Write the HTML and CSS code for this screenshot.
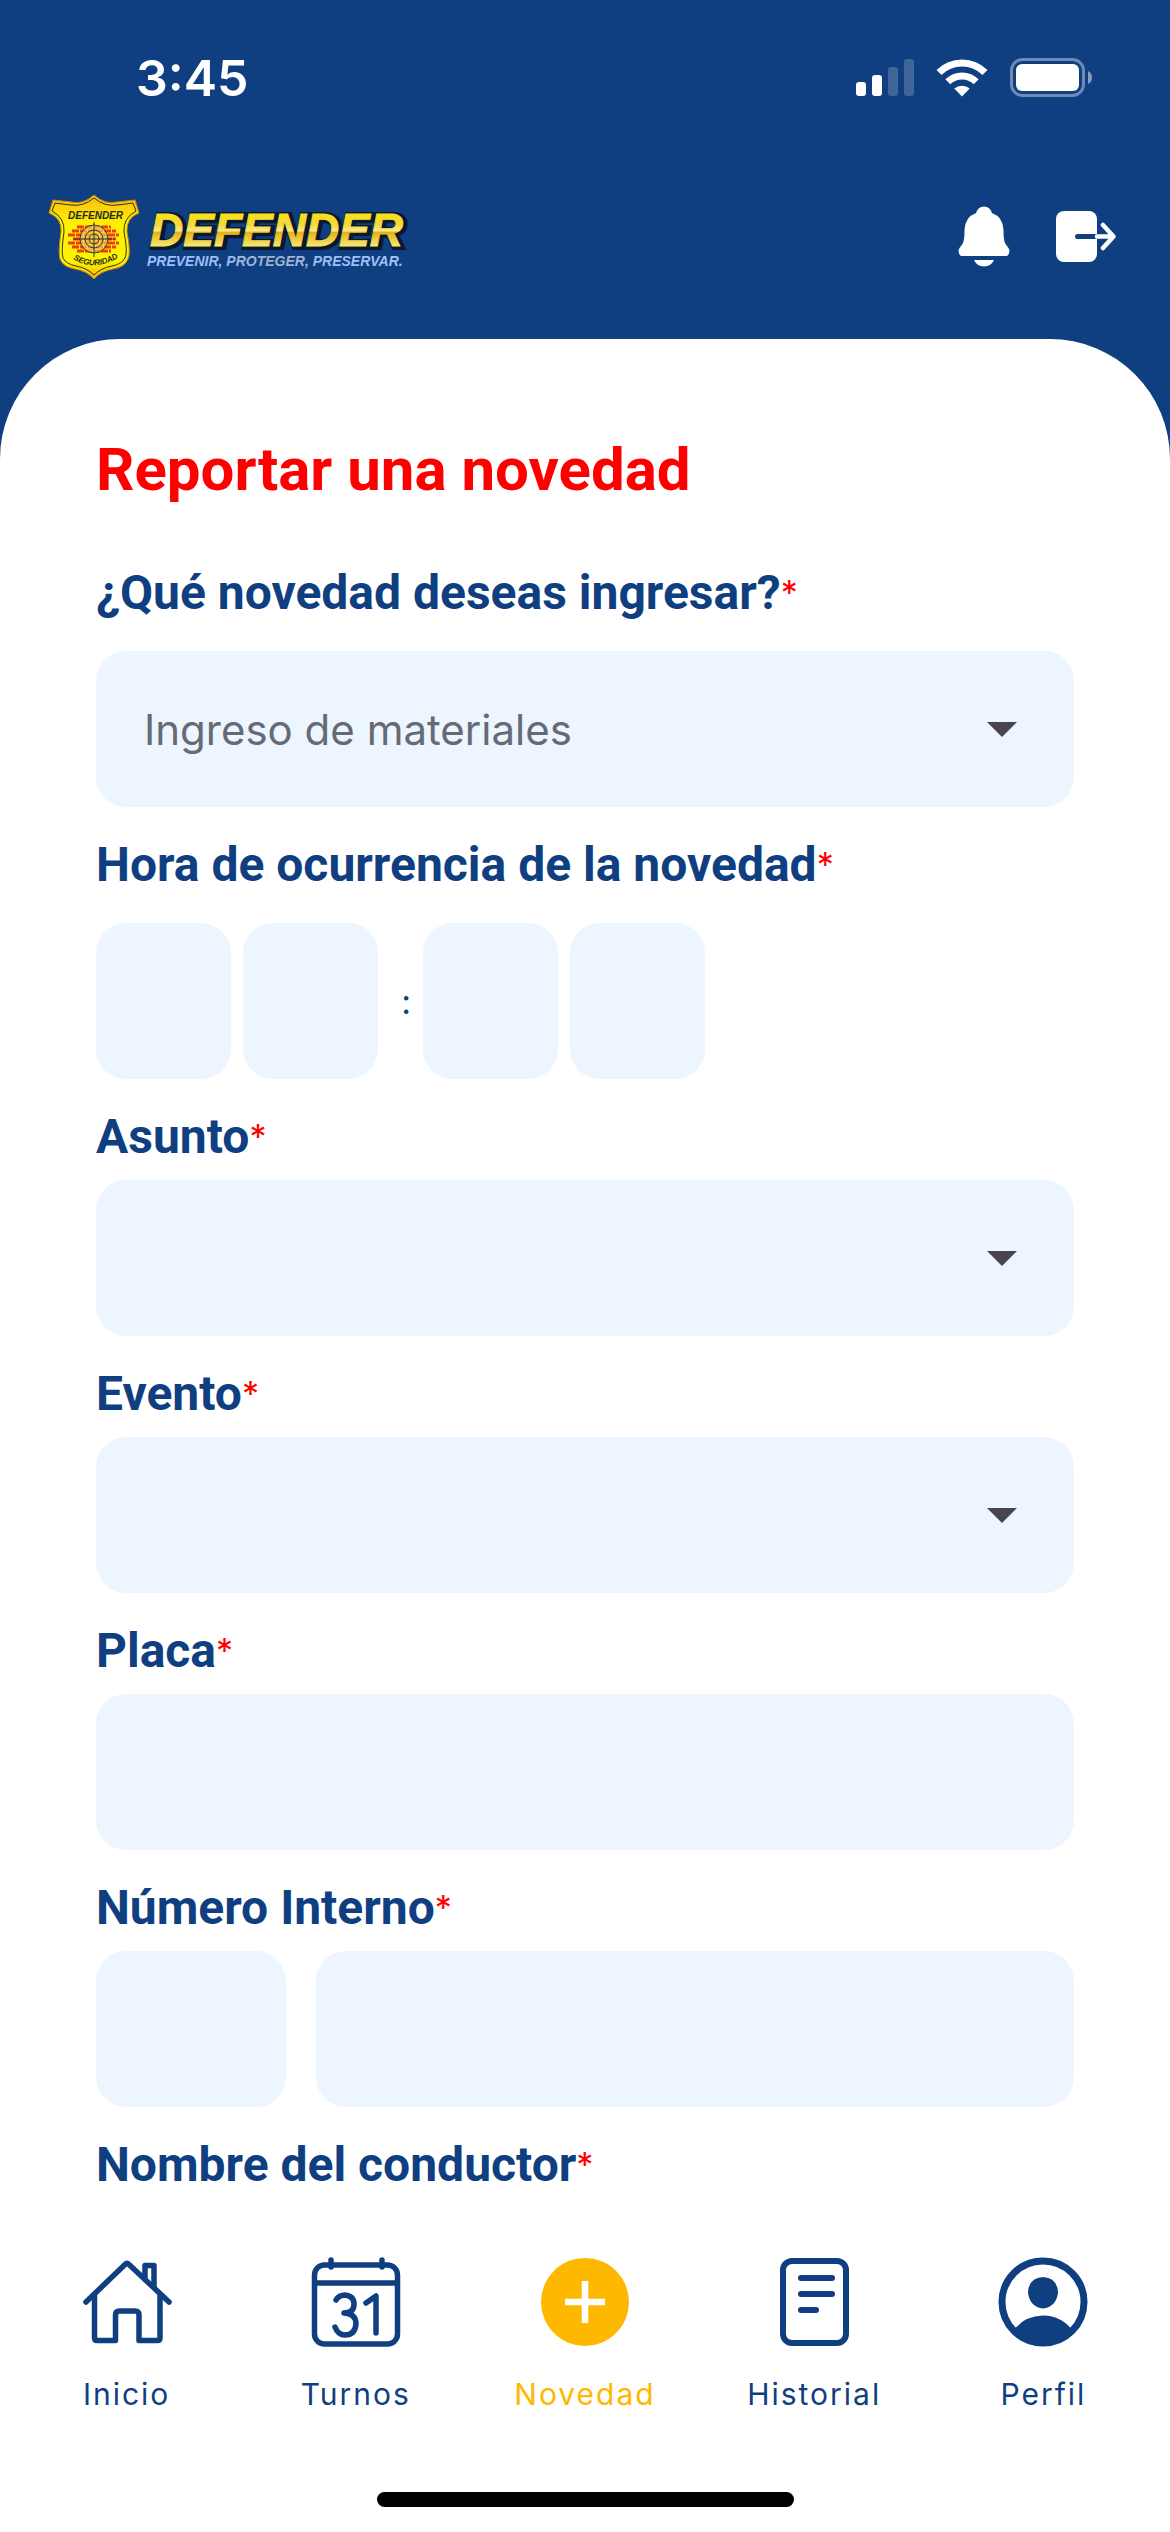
FILE: index.html
```html
<!DOCTYPE html>
<html lang="es">
  <head>
    <meta charset="UTF-8" />
    <meta name="viewport" content="width=device-width, initial-scale=1.0" />
    <title>Reportar una novedad</title>
    <link rel="stylesheet" href="styles.css">
  </head>
  <body>
    <!-- Status bar -->
    <div class="status-bar">
      <span class="clock">3:45</span>
      <div class="status-icons">
        <svg width="58" height="38" viewBox="0 0 58 38" fill="#fff">
          <rect x="0" y="23" width="10" height="14" rx="3" />
          <rect x="16" y="16" width="10" height="21" rx="3" />
          <rect x="32" y="8" width="10" height="29" rx="3" opacity="0.2" />
          <rect x="48" y="0" width="10" height="37" rx="3" opacity="0.2" />
        </svg>
        <svg width="52" height="38" viewBox="0 0 52 38" fill="none" stroke="#fff" stroke-width="7">
          <path d="M3 13.500 A32.500 32.500 0 0 1 49 13.500" />
          <path d="M11.800 22.800 A20 20 0 0 1 40.200 22.800" />
          <path d="M26 37.500 L18.300 29.600 A11.500 11.500 0 0 1 33.700 29.600 Z" fill="#fff" stroke="none" />
        </svg>
        <svg width="82" height="40" viewBox="0 0 82 40">
          <rect x="1.500" y="1.500" width="72" height="36" rx="11" fill="none" stroke="#fff" stroke-width="3" opacity="0.4" />
          <rect x="6" y="6" width="63" height="27" rx="6" fill="#fff" />
          <path d="M78 13 Q82 15 82 19.500 Q82 24 78 26 Z" fill="#fff" opacity="0.5" />
        </svg>
      </div>
    </div>

    <!-- Header -->
    <header class="header">
      <svg class="logo" width="364" height="90" viewBox="0 0 364 90" role="img" aria-label="Defender Seguridad">
        <defs>
          <linearGradient id="shield" x1="0" y1="0" x2="0" y2="1">
            <stop offset="0" stop-color="#fdb813" />
            <stop offset="0.350" stop-color="#fff200" />
            <stop offset="0.800" stop-color="#fff200" />
            <stop offset="1" stop-color="#f9b000" />
          </linearGradient>
          <linearGradient id="gold" x1="0" y1="0" x2="0" y2="1">
            <stop offset="0.180" stop-color="#f7e01c" />
            <stop offset="0.400" stop-color="#f3d93a" />
            <stop offset="0.520" stop-color="#faec90" />
            <stop offset="0.540" stop-color="#e6b012" />
            <stop offset="0.820" stop-color="#f8ea78" />
          </linearGradient>
          <linearGradient id="motto" x1="0" y1="0" x2="1" y2="0">
            <stop offset="0" stop-color="#9dc0ff" />
            <stop offset="0.300" stop-color="#9dbcf5" />
            <stop offset="0.480" stop-color="#9fb0c4" />
            <stop offset="0.700" stop-color="#9dbcf5" />
            <stop offset="1" stop-color="#a3c4ff" />
          </linearGradient>
        </defs>
        <path d="M46 3 Q57 13 69 10 Q78 9 87 8 L91 21 Q78 26 79 40 Q83 61 80 67 Q77 75 65 77 Q53 79 46 87 Q39 79 27 77 Q15 75 12 67 Q10 61 13 40 Q14 26 1 21 L5 8 Q14 9 23 10 Q35 13 46 3 Z" fill="url(#shield)" stroke="#c9890c" stroke-width="1" />
        <path d="M46 6 Q57 15 69 13 Q78 12 85 11 L88 19 Q75 26 76 40 Q80 60 77 66 Q74 72 64 74 Q53 76 46 83 Q39 76 28 74 Q18 72 15 66 Q13 60 16 40 Q17 26 4 19 L7 11 Q14 12 23 13 Q35 15 46 6 Z" fill="none" stroke="#26351a" stroke-width="1" />
        <text class="shield-text" x="20" y="27">DEFENDER</text>
        <path class="bricks" d="M29 35 H63 M24 39 H68 M20 43 H71 M25 47 H68 M20 51 H71 M24 55 H68 M29 59 H63" />
        <g fill="none" stroke="#26402c" stroke-width="1">
          <circle cx="46" cy="47" r="14" fill="#f8cf5c" fill-opacity="0.650" />
          <circle cx="46" cy="47" r="9" />
          <circle cx="46" cy="47" r="5" />
          <path d="M46 30 V65 M25 47 H67" />
        </g>
        <path id="arc" d="M25 67 Q46 80 70 66" fill="none" />
        <text class="shield-text shield-text-small"><textPath href="#arc">SEGURIDAD</textPath></text>
        <text class="brand brand-shadow" x="104" y="55">DEFENDER</text>
        <text class="brand brand-fill" x="102" y="54">DEFENDER</text>
        <text class="motto" x="99" y="74" fill="url(#motto)">PREVENIR, PROTEGER, PRESERVAR.</text>
      </svg>
      <div class="header-actions">
        <button type="button" class="icon-button" aria-label="Notificaciones">
          <svg width="52" height="62" viewBox="0 0 52 62" fill="#fff">
            <path d="M26 0.500 Q32 0.500 34 7 Q45 11 45.500 24 Q45.500 34 47 37 Q48 39 50.500 42 Q53 47 49 50 H3 Q-1 47 1.500 42 Q4 39 5 37 Q6.500 34 6.500 24 Q7 11 18 7 Q20 0.500 26 0.500 Z" />
            <path d="M16 54 H36 Q33 60.500 26 60.500 Q19 60.500 16 54 Z" />
          </svg>
        </button>
        <button type="button" class="icon-button" aria-label="Salir">
          <svg width="60" height="52" viewBox="0 0 60 52">
            <rect x="0" y="0" width="41" height="51" rx="8" fill="#fff" />
            <path d="M21.500 25.500 H41" stroke="#0f3f80" stroke-width="5" stroke-linecap="round" />
            <path d="M41 25.500 H56 M47 14 L57.500 25.500 L47 37" fill="none" stroke="#fff" stroke-width="4.500" stroke-linecap="round" stroke-linejoin="round" />
          </svg>
        </button>
      </div>
    </header>

    <!-- Form -->
    <main class="panel">
      <h1>Reportar una novedad</h1>
      <form>
        <div class="field spaced">
          <label for="tipo">¿Qué novedad deseas ingresar?<span class="required">*</span></label>
          <div class="select-wrap">
            <select id="tipo">
              <option>Ingreso de materiales</option>
            </select>
          </div>
        </div>

        <div class="field spaced">
          <label for="hora1">Hora de ocurrencia de la novedad<span class="required">*</span></label>
          <div class="time-row">
            <input type="text" id="hora1" class="digit" maxlength="1" inputmode="numeric">
            <input type="text" class="digit" maxlength="1" inputmode="numeric" aria-label="Hora, segundo dígito">
            <span class="colon">:</span>
            <input type="text" class="digit" maxlength="1" inputmode="numeric" aria-label="Minutos, primer dígito">
            <input type="text" class="digit" maxlength="1" inputmode="numeric" aria-label="Minutos, segundo dígito">
          </div>
        </div>

        <div class="field">
          <label for="asunto">Asunto<span class="required">*</span></label>
          <div class="select-wrap">
            <select id="asunto"></select>
          </div>
        </div>

        <div class="field">
          <label for="evento">Evento<span class="required">*</span></label>
          <div class="select-wrap">
            <select id="evento"></select>
          </div>
        </div>

        <div class="field">
          <label for="placa">Placa<span class="required">*</span></label>
          <input type="text" id="placa">
        </div>

        <div class="field">
          <label for="interno">Número Interno<span class="required">*</span></label>
          <div class="number-row">
            <input type="text" id="interno" class="prefix">
            <input type="text" aria-label="Número">
          </div>
        </div>

        <div class="field">
          <label for="conductor">Nombre del conductor<span class="required">*</span></label>
          <input type="text" id="conductor">
        </div>
      </form>
    </main>

    <!-- Bottom navigation -->
    <nav class="tab-bar">
      <a href="#inicio">
        <svg width="90" height="92" viewBox="0 0 90 92" fill="none" stroke="currentColor" stroke-width="5.500" stroke-linecap="round" stroke-linejoin="round">
          <path d="M4 46 L43 8.500 Q45 6.500 47 8.500 L87 46" />
          <path d="M12.500 40 V82 Q12.500 84.500 15 84.500 H33.500 V59 Q33.500 55 37.500 55 H53 Q57 55 57 59 V84.500 H75.500 Q78 84.500 78 82 V40" />
          <path d="M63 23 V9.500 H72 V31" />
        </svg>
        <span>Inicio</span>
      </a>
      <a href="#turnos">
        <svg width="90" height="92" viewBox="0 0 90 92" fill="none" stroke="currentColor" stroke-width="5.500" stroke-linecap="round" stroke-linejoin="round">
          <rect x="3.500" y="9" width="83" height="79" rx="10" />
          <path d="M4 27 H86 M20 4 V11 M71 4 V11" />
          <path d="M25 44 Q28 39 34 39 Q43 40 43 48 Q43 57 33 57 Q45 57.500 45 68 Q44 79 34 79 Q27 79 24 71" />
          <path d="M55 47 L65 40 V77" />
        </svg>
        <span>Turnos</span>
      </a>
      <a href="#novedad" class="active">
        <svg width="90" height="92" viewBox="0 0 90 92">
          <circle cx="45" cy="46" r="44" fill="currentColor" />
          <path d="M45 25 V67 M25 46 H65" stroke="#fff" stroke-width="6.500" />
        </svg>
        <span>Novedad</span>
      </a>
      <a href="#historial">
        <svg width="90" height="92" viewBox="0 0 90 92" fill="none" stroke="currentColor" stroke-width="6" stroke-linecap="round">
          <rect x="14" y="5" width="63" height="82" rx="9" />
          <path d="M32 22 H63 M32 38 H63 M32 54 H47" />
        </svg>
        <span>Historial</span>
      </a>
      <a href="#perfil">
        <svg width="90" height="92" viewBox="0 0 90 92" fill="currentColor">
          <circle cx="45" cy="46" r="41" fill="none" stroke="currentColor" stroke-width="7" />
          <path d="M45 21 Q60 22 60 37 Q58 51 45 52.500 Q32 51 30 37 Q30 22 45 21 Z" />
          <path d="M16 74 Q26 60 45 59.500 Q64 60 74 74 Q62 89 45 89 Q28 89 16 74 Z" />
        </svg>
        <span>Perfil</span>
      </a>
    </nav>
    <div class="home-indicator"></div>
  </body>
</html>
```
FILE: styles.css
```css
* {
  box-sizing: border-box;
}

body {
  margin: 0;
  height: 100vh;
  display: flex;
  flex-direction: column;
  background-color: #0f3f80;
  color: #0f3f80;
  font-family: Roboto, "Liberation Sans", sans-serif;
}

/* Status bar */
.status-bar {
  display: flex;
  justify-content: space-between;
  align-items: center;
  padding: 48px 78px 0 136px;
  color: #fff;
}

.clock {
  font-family: Inter, sans-serif;
  font-size: 50px;
  font-weight: 600;
  line-height: 60px;
}

.status-icons {
  display: flex;
  align-items: center;
  gap: 22px;
}

/* Header */
.header {
  display: flex;
  justify-content: space-between;
  align-items: center;
  padding: 84px 54px 57px 48px;
}

.header-actions {
  display: flex;
  align-items: center;
  gap: 46px;
}

.icon-button {
  display: flex;
  padding: 0;
  border: none;
  background: none;
  cursor: pointer;
}

.shield-text {
  font-family: "Liberation Sans", sans-serif;
  font-size: 10px;
  font-weight: bold;
  font-style: italic;
  fill: #1b2c1a;
}

.shield-text-small {
  font-size: 8px;
}

.bricks {
  fill: none;
  stroke: #f03a1c;
  stroke-width: 3;
  stroke-dasharray: 7 1;
}

.brand {
  font-family: "Liberation Sans", sans-serif;
  font-size: 46px;
  font-weight: bold;
  font-style: italic;
}

.brand-shadow {
  fill: #0a1a2c;
  stroke: #0a1a2c;
  stroke-width: 6px;
}

.brand-fill {
  fill: url(#gold);
  stroke: url(#gold);
  stroke-width: 1px;
}

.motto {
  font-family: "Liberation Sans", sans-serif;
  font-size: 14px;
  font-weight: bold;
  font-style: italic;
}

/* Form panel */
.panel {
  flex: 1;
  min-height: 0;
  overflow-y: auto;
  scrollbar-width: none;
  padding: 96px 96px 0;
  background-color: #fff;
  border-radius: 120px 120px 0 0;
}

h1 {
  margin: 0 0 30px;
  font-size: 60px;
  font-weight: 700;
  line-height: 70px;
  color: #ff0000;
}

.field {
  display: flex;
  flex-direction: column;
  gap: 15px;
  padding-top: 30px;
}

.spaced {
  gap: 30px;
}

label {
  display: flex;
  align-items: flex-start;
  font-size: 48px;
  font-weight: 700;
  line-height: 56px;
}

.required {
  font-family: Inter, sans-serif;
  font-size: 34px;
  font-weight: 400;
  line-height: 56px;
  color: #ff0000;
}

input,
select {
  width: 100%;
  height: 156px;
  padding: 0 48px;
  border: none;
  border-radius: 30px;
  background-color: #edf5ff;
  color: #656b76;
  font-family: Inter, sans-serif;
  font-size: 42px;
}

select {
  appearance: none;
}

/* Dropdown arrow */
.select-wrap {
  display: grid;
  align-items: center;
}

.select-wrap > select,
.select-wrap::after {
  grid-area: 1 / 1;
}

.select-wrap::after {
  content: "";
  justify-self: end;
  margin-right: 57px;
  border: 15px solid transparent;
  border-top-color: #49454f;
  border-bottom: none;
  pointer-events: none;
}

.time-row {
  display: flex;
  align-items: center;
  gap: 12px;
}

.digit {
  width: 135px;
}

.colon {
  width: 21px;
  font-family: Inter, sans-serif;
  font-size: 34px;
  text-align: right;
}

.number-row {
  display: flex;
  gap: 30px;
}

.prefix {
  width: 190px;
  flex-shrink: 0;
}

/* Bottom navigation */
.tab-bar {
  display: flex;
  padding: 48px 12px 0;
  background-color: #fff;
}

.tab-bar a {
  flex: 1;
  display: flex;
  flex-direction: column;
  align-items: center;
  gap: 28px;
  color: #0f3f80;
  font-family: Inter, sans-serif;
  font-size: 30px;
  line-height: 36px;
  letter-spacing: 2px;
  text-decoration: none;
}

.tab-bar a.active {
  color: #ffb800;
}

.home-indicator {
  display: flex;
  justify-content: center;
  padding: 80px 0 25px;
  background-color: #fff;
}

.home-indicator::before {
  content: "";
  width: 417px;
  height: 15px;
  border-radius: 8px;
  background-color: #000;
}
```
